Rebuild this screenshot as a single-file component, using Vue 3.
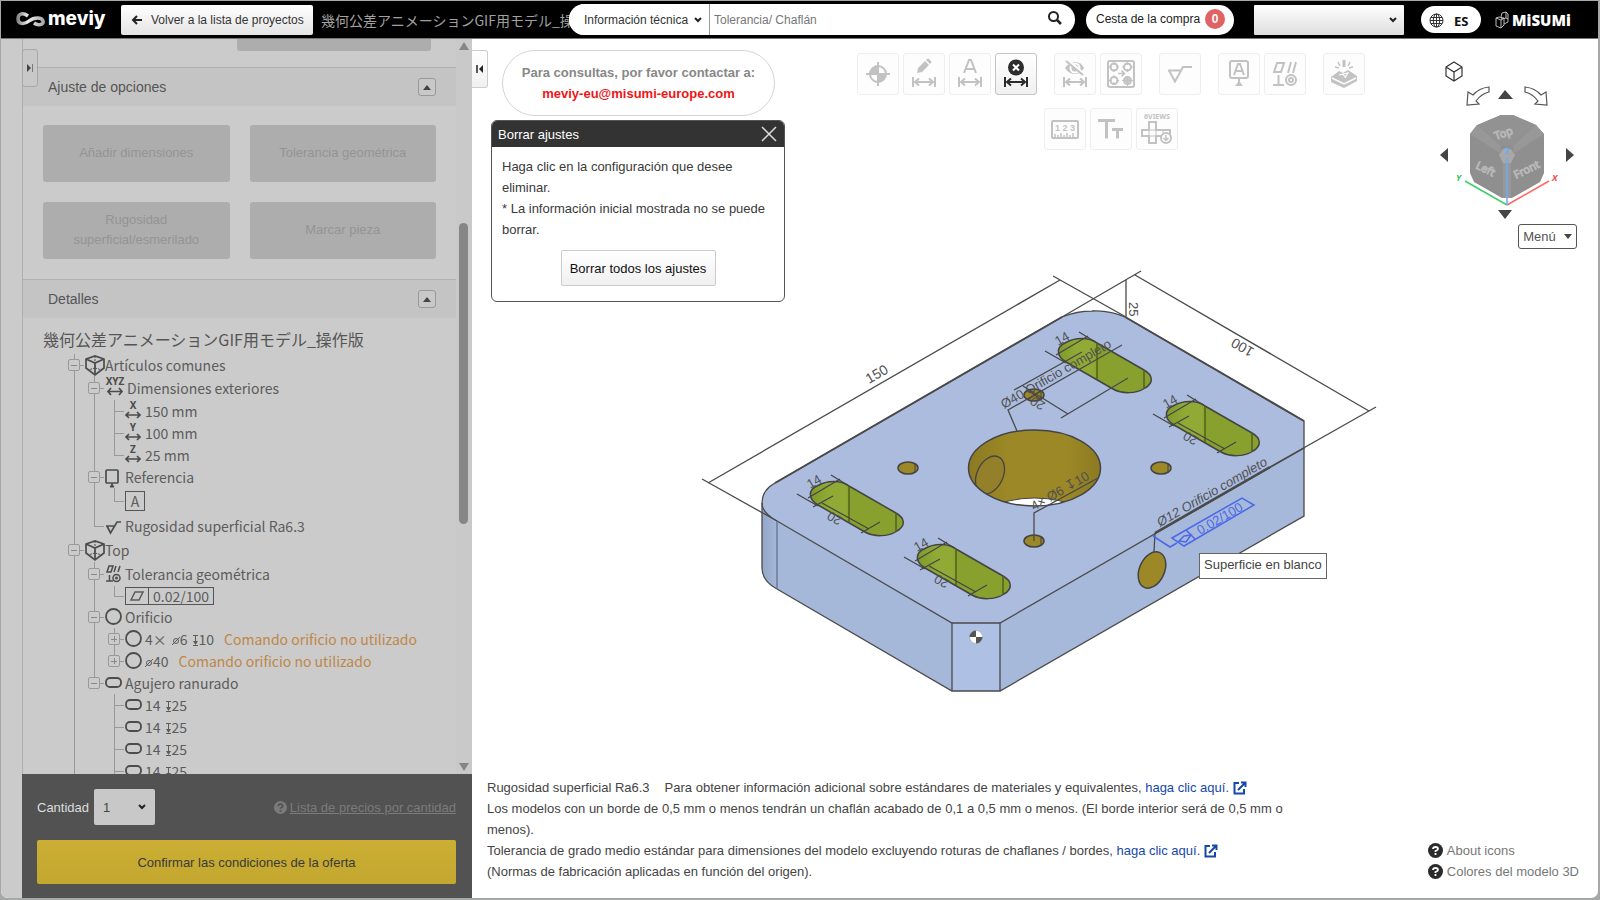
<script setup>
import { ref } from 'vue'

const dim = '<path d="M10 24v10M32 24v10M12 29h18M16 25.500L12 29l4 3.500M26 25.500l4 3.500-4 3.500" fill="none" stroke="currentColor" stroke-width="2"/>'

const toolRows = [
  [
    [
      { label: 'Origen', art: '<circle cx="21" cy="21" r="8" fill="none" stroke="currentColor" stroke-width="2"/><path d="M21 21v-8a8 8 0 0 0-8 8zM21 21v8a8 8 0 0 0 8-8z" fill="currentColor"/><path d="M21 9v24M9 21h24" stroke="currentColor" stroke-width="2"/>' },
      { label: 'Editar dimensiones', art: '<path d="M14 20l1-5 7-7 4 4-7 7zM23 7l1-1q1-1 2 0l2 2q1 1 0 2l-1 1z" fill="currentColor"/>' + dim },
      { label: 'Texto de dimensiones', art: '<path d="M15 20l5-13h2l5 13M17 16h8" fill="none" stroke="currentColor" stroke-width="2"/>' + dim },
      { label: 'Borrar ajustes', active: true, art: '<circle cx="21" cy="14.500" r="8" fill="currentColor"/><path d="M18 11.500l6 6M24 11.500l-6 6" stroke="#fff" stroke-width="2"/>' + dim },
    ],
    [
      { label: 'Ocultar dimensiones', art: '<path d="M11 15q4-6 10-6t9 6q-3 6-9 6t-10-6z" fill="currentColor"/><circle cx="21" cy="15" r="4.500" fill="none" stroke="#fdfdfd" stroke-width="2"/><path d="M13 7l17 15" stroke="#fdfdfd" stroke-width="4"/><path d="M12 8l17 14" stroke="currentColor" stroke-width="2"/>' + dim },
      { label: 'Copiar ajustes', art: '<g fill="none" stroke="currentColor" stroke-width="2"><rect x="8" y="8" width="26" height="26" rx="2"/><circle cx="14" cy="14" r="3.500"/><circle cx="27.500" cy="14" r="3.500"/><circle cx="14" cy="27.500" r="3.500"/><circle cx="27.500" cy="27.500" r="3.500"/><path d="M18 20.500h6M21.500 17.500l3 3-3 3" stroke-width="1.500"/></g><path d="M14 9v3M14 16v3M9 14h3M16 14h3M27.500 9v3M27.500 16v3M22 14h3M30 14h3M14 22v3M14 29v3M9 27.500h3M16 27.500h3M22 27.500h3M30 27.500h3M27.500 30v3" stroke="currentColor" stroke-width="1"/><circle cx="27.500" cy="27.500" r="2.500" fill="currentColor"/>' },
    ],
    [
      { label: 'Rugosidad', art: '<path d="M9 17.500h13M10 17.500l6 11 8-14.500h9" fill="none" stroke="currentColor" stroke-width="2"/>' },
    ],
    [
      { label: 'Referencia', art: '<rect x="12" y="8" width="18" height="17" rx="2" fill="none" stroke="currentColor" stroke-width="2"/><path d="M16 22l4-11h2l4 11M18 18h6" fill="none" stroke="currentColor" stroke-width="2"/><path d="M21 25v6" stroke="currentColor" stroke-width="2"/><path d="M17 33l4-5 4 5z" fill="currentColor"/>' },
      { label: 'Tolerancia geométrica', art: '<g fill="none" stroke="currentColor" stroke-width="2"><path d="M13 10h7l-3 9h-7zM27 9l-3 11M32 9l-3 11M9 32h11M14.500 22v10"/><circle cx="27" cy="27" r="5"/><circle cx="27" cy="27" r="2"/></g>' },
    ],
    [
      { label: 'Marcar pieza', art: '<g stroke="currentColor" fill="none"><path d="M21 7v7" stroke-width="3"/><path d="M15 9l2 4M27 9l-2 4M12 14l4 1M30 14l-4 1" stroke-width="1.500"/></g><path d="M8 24l8-6 4 2 5-3 9 6v5L21 35 8 29z" fill="currentColor"/><path d="M9 25l12 6 12-6" stroke="#fdfdfd" stroke-width="1.500" fill="none"/><path d="M16 22l9-2-3 5M19 21l4 3" stroke="#fdfdfd" stroke-width="1.200" fill="none"/>' },
    ],
  ],
  [
    [
      { label: 'Medir', art: '<rect x="8" y="13" width="26" height="17" rx="1" fill="none" stroke="currentColor" stroke-width="2"/><text x="21" y="23" font-size="9" font-weight="bold" text-anchor="middle" fill="currentColor" font-family="Liberation Sans">1 2 3</text><path d="M11 30v-4M14 30v-3M17 30v-5M20 30v-3M23 30v-5M26 30v-3M29 30v-5" stroke="currentColor" stroke-width="1.500"/>' },
      { label: 'Tamaño de texto', art: '<path d="M8 12.500h17M16.500 12.500v18M22 21.500h11M27.500 21.500v9" stroke="currentColor" stroke-width="3"/>' },
      { label: 'Seis vistas', art: '<text x="21" y="11" font-size="7" font-weight="bold" text-anchor="middle" fill="currentColor" font-family="Noto Sans">6VIEWS</text><path d="M13 14h7v8h14v6H20v7h-7v-7H6v-6h7z" fill="none" stroke="currentColor" stroke-width="2"/><path d="M13 22h7v6h-7zM27 22v6" fill="none" stroke="currentColor" stroke-width="1"/><circle cx="30" cy="30" r="5" fill="#fdfdfd" stroke="currentColor" stroke-width="2"/><path d="M30 27v5M27.500 30l2.500 2.500 2.500-2.500" fill="none" stroke="currentColor" stroke-width="1.500"/>' },
    ],
  ],
]

const icons = {
  cube: '<path d="M1 4l9-3 9 3v9l-9 7-9-7zM1 4l9 4 9-4M10 8v12" fill="none" stroke="currentColor" stroke-width="1.700"/><path d="M10 1v12M10 13l-7 2M10 13l7 2" stroke="currentColor" stroke-dasharray="2 1" fill="none"/>',
  xyz: '<text x="10" y="7" font-size="10" font-weight="bold" text-anchor="middle" fill="currentColor" font-family="Noto Sans">XYZ</text><path d="M3 13.500h14M6 10l-3 3.500 3 3.500M14 10l3 3.500-3 3.500" fill="none" stroke="currentColor" stroke-width="1.700"/>',
  x: '<text x="8" y="8" font-size="10" font-weight="bold" text-anchor="middle" fill="currentColor" font-family="Noto Sans">X</text>',
  y: '<text x="8" y="8" font-size="10" font-weight="bold" text-anchor="middle" fill="currentColor" font-family="Noto Sans">Y</text>',
  z: '<text x="8" y="8" font-size="10" font-weight="bold" text-anchor="middle" fill="currentColor" font-family="Noto Sans">Z</text>',
  datum: '<rect x="1" y="3" width="12" height="13" rx="1" fill="none" stroke="currentColor" stroke-width="1.700"/><path d="M7 16v2M5 20l2-3 2 3z" fill="currentColor" stroke="currentColor"/>',
  rough: '<path d="M1 10h8M2 10l3.500 7L12 6h4" fill="none" stroke="currentColor" stroke-width="1.700"/>',
  geo: '<path d="M4 2h4L6 8H2zM11 2L9 8M15 2l-2 6M1 17h7M4.500 11v6" fill="none" stroke="currentColor" stroke-width="1.500"/><circle cx="11.500" cy="14" r="3.500" fill="none" stroke="currentColor" stroke-width="1.500"/><circle cx="11.500" cy="14" r="1.500" fill="currentColor"/>',
  hole: '<circle cx="8.500" cy="9.500" r="7.500" fill="none" stroke="currentColor" stroke-width="1.800"/>',
  slot: '<rect x="1" y="5" width="15" height="9" rx="4" fill="none" stroke="currentColor" stroke-width="1.800"/>',
}
const arrow = '<path d="M1 14h14M4 11l-3 3 3 3M12 11l3 3-3 3" fill="none" stroke="currentColor" stroke-width="1.700"/>'
icons.x += arrow
icons.y += arrow
icons.z += arrow

const tree = [
  { g: ['minus'], icon: 'cube', w: 20, text: 'Artículos comunes', h: 'h22' },
  { g: ['line', 'minus'], icon: 'xyz', w: 22, text: 'Dimensiones exteriores', h: 'h24' },
  { g: ['line', 'line', 'tee'], icon: 'x', w: 20, text: '150 mm', h: 'h22' },
  { g: ['line', 'line', 'tee'], icon: 'y', w: 20, text: '100 mm', h: 'h22' },
  { g: ['line', 'line', 'elbow'], icon: 'z', w: 20, text: '25 mm', h: 'h22' },
  { g: ['line', 'minus'], icon: 'datum', w: 20, text: 'Referencia', h: 'h22' },
  { g: ['line', 'line', 'elbow'], box: 'A', h: 'h26' },
  { g: ['line', 'elbow'], icon: 'rough', w: 20, text: 'Rugosidad superficial Ra6.3', h: 'h24' },
  { g: ['minus'], icon: 'cube', w: 20, text: 'Top', h: 'h24' },
  { g: ['line', 'minus'], icon: 'geo', w: 20, text: 'Tolerancia geométrica', h: 'h24' },
  { g: ['line', 'line', 'elbow'], frame: '0.02/100', h: 'h20' },
  { g: ['line', 'minus'], icon: 'hole', w: 20, text: 'Orificio', h: 'h22' },
  { g: ['line', 'line', 'plus'], icon: 'hole', w: 20, text: '4×', dia: '6', depth: '10', warn: true, h: 'h22' },
  { g: ['line', 'line', 'plus end'], icon: 'hole', w: 20, dia: '40', warn: true, h: 'h22' },
  { g: ['line', 'minus end'], icon: 'slot', w: 20, text: 'Agujero ranurado', h: 'h22' },
  ...[1, 2, 3, 4].map(() => ({ g: ['line', 'none', 'tee'], icon: 'slot', w: 20, text: '14', depth: '25', h: 'h22' })),
]

const slots = [[0, 0, true], [107, 63, true], [248, -143, false], [356, -80, true]]
const holes = [[908, 468], [1034, 395], [1161, 468], [1034, 541]]
const qty = ref('1')
</script>

<template>
  <div class="app">
    <header class="top">
      <div class="logo">
        <svg width="30" height="16" viewBox="0 0 30 16" aria-hidden="true">
          <defs><linearGradient id="lg" x1="0" x2="1"><stop offset="0" stop-color="#888" /><stop offset=".4" stop-color="#eee" /><stop offset="1" stop-color="#aaa" /></linearGradient></defs>
          <path d="M12 4C6 0 2 2 2 7c0 5 6 6 11 2 5-4 13-4 14 0 1 4-5 5-9 2" fill="none" stroke="url(#lg)" stroke-width="3.500" />
        </svg>
        <span>meviy</span>
      </div>
      <button class="back" type="button">
        <svg width="12" height="10" viewBox="0 0 12 10" aria-hidden="true"><path d="M6 1L2 5l4 4M2 5h9" fill="none" stroke="#222" stroke-width="2" /></svg>
        <span>Volver a la lista de proyectos</span>
      </button>
      <span class="project">幾何公差アニメーションGIF用モデル_操作版</span>
      <form class="search" @submit.prevent>
        <select aria-label="Tipo de búsqueda"><option>Información técnica</option></select>
        <input type="text" placeholder="Tolerancia/ Chaflán" aria-label="Buscar" />
        <button type="submit" aria-label="Buscar">
          <svg width="16" height="16" viewBox="0 0 16 16"><circle cx="6.500" cy="6.500" r="4.500" fill="none" stroke="#222" stroke-width="2" /><path d="M10 10l4 4" stroke="#222" stroke-width="2.500" /></svg>
        </button>
      </form>
      <button class="cart" type="button">Cesta de la compra <b>0</b></button>
      <select class="account" aria-label="Cuenta"><option></option></select>
      <button class="lang" type="button">
        <svg width="15" height="15" viewBox="0 0 15 15" aria-hidden="true"><g fill="none" stroke="#333"><circle cx="7.500" cy="7.500" r="6.500" /><ellipse cx="7.500" cy="7.500" rx="3.200" ry="6.500" /><path d="M7.500 1v13M1 7.500h13M2 4.500h11M2 10.500h11" /></g></svg>
        <span>ES</span>
      </button>
      <div class="misumi">
        <svg width="14" height="18" viewBox="0 0 14 18" aria-hidden="true"><path d="M1 7l5 2v8l-5-2zM6 9l3-2v7l-3 3M1 7l3-1 5 1M6 6l1-4 4-1v6l-4 1zM11 1l2 2v8l-4 2M11 7l2 1" fill="none" stroke="#bbb" /></svg>
        <span>MiSUMi</span>
      </div>
    </header>

    <div class="body">
      <div class="gutter"></div>
      <aside class="side">
        <button class="tab dim" type="button" aria-label="Expandir panel">
          <svg width="8" height="10" viewBox="0 0 8 10"><path d="M1 1l4 4-4 4z" fill="#444" /><path d="M6.500 1v8" stroke="#777" /></svg>
        </button>
        <div class="scroller">
          <div class="content">
            <div class="cutoff"><button type="button" disabled aria-label="Opciones"></button></div>
            <h2>Ajuste de opciones
              <button type="button" aria-label="Contraer ajuste de opciones"><svg width="8" height="5" viewBox="0 0 8 5"><path d="M0 5l4-5 4 5z" fill="#444" /></svg></button>
            </h2>
            <div class="options">
              <button type="button" disabled>Añadir dimensiones</button>
              <button type="button" disabled>Tolerancia geométrica</button>
              <button type="button" disabled>Rugosidad superficial/esmerilado</button>
              <button type="button" disabled>Marcar pieza</button>
            </div>
            <h2>Detalles
              <button type="button" aria-label="Contraer detalles"><svg width="8" height="5" viewBox="0 0 8 5"><path d="M0 5l4-5 4 5z" fill="#444" /></svg></button>
            </h2>
            <div class="model-name">幾何公差アニメーションGIF用モデル_操作版</div>
            <ul class="tree">
              <li v-for="(row, i) in tree" :key="i" :class="row.h">
                <span v-for="(g, j) in row.g" :key="j" class="guide" :class="g"><i v-if="/us/.test(g)"></i></span>
                <svg v-if="row.icon" class="ti" :width="row.w" height="20" v-html="icons[row.icon]"></svg>
                <span v-if="row.box" class="boxed">{{ row.box }}</span>
                <span v-if="row.frame" class="frame">
                  <svg width="22" height="16" viewBox="0 0 22 16"><path d="M9 4h8l-4 8H5z" fill="none" stroke="currentColor" stroke-width="1.500" /></svg>
                  <span>{{ row.frame }}</span>
                </span>
                <span v-if="row.text" class="label">{{ row.text }}</span>
                <span v-if="row.dia" class="value" :class="{ gap: row.text }">
                  <svg width="8" height="14" viewBox="0 0 8 14"><circle cx="4" cy="8" r="2.500" fill="none" stroke="currentColor" /><path d="M0 12l8-8" stroke="currentColor" /></svg>{{ row.dia }}
                </span>
                <span v-if="row.depth" class="value near">
                  <svg width="7" height="14" viewBox="0 0 7 14"><path d="M1 2.500h5M3.500 2v8M1 12.500h5" fill="none" stroke="currentColor" /><path d="M1 8h5l-2.500 4z" fill="currentColor" /></svg>{{ row.depth }}
                </span>
                <span v-if="row.warn" class="warn">Comando orificio no utilizado</span>
              </li>
            </ul>
          </div>
          <div class="bar"><span class="up"></span><span class="thumb"></span><span class="down"></span></div>
        </div>
        <div class="offer">
          <div class="qty">
            <label for="qty">Cantidad</label>
            <select id="qty" v-model="qty"><option>1</option><option>2</option></select>
            <a href="#"><svg width="13" height="13" viewBox="0 0 15 15" aria-hidden="true"><circle cx="7.500" cy="7.500" r="7.500" fill="#7b7b7b" /><path d="M5 6q0-2.500 2.500-2.500T10 6q0 1-2.500 2.500V9M7.500 10.500v2" fill="none" stroke="#525252" stroke-width="2" /></svg><span>Lista de precios por cantidad</span></a>
          </div>
          <button type="button" class="confirm">Confirmar las condiciones de la oferta</button>
        </div>
      </aside>

      <main class="main">
        <svg class="model" width="700" height="450" viewBox="690 260 700 450" role="img" aria-label="Modelo 3D">
          <defs>
            <linearGradient id="gold" x1="0" x2="1"><stop offset="0" stop-color="#8c7a22" /><stop offset=".3" stop-color="#9c8826" /><stop offset=".75" stop-color="#9c8826" /><stop offset="1" stop-color="#8c7a22" /></linearGradient>
            <linearGradient id="lime" x1="0" x2="1"><stop offset="0" stop-color="#7f9a2c" /><stop offset=".2" stop-color="#90aa35" /><stop offset=".38" stop-color="#90aa35" /><stop offset=".42" stop-color="#88a12e" /><stop offset="1" stop-color="#88a12e" /></linearGradient>
            <linearGradient id="side" x1="0" x2="1"><stop offset="0" stop-color="#94a6c8" /><stop offset="1" stop-color="#a5b8da" /></linearGradient>
            <clipPath id="bore"><ellipse cx="1034.500" cy="468" rx="66" ry="38" /></clipPath>
          </defs>
          <path d="M762 500V568Q762 581 777 589V521z" fill="url(#side)" />
          <path d="M777 521V589L952 691V623z" fill="#a6b8d9" />
          <path d="M952 623h48v68h-48z" fill="#aec1e4" />
          <path d="M1000 623L1304 448V516L1000 691z" fill="#a7b9da" />
          <path d="M952 623h48L1304 448V421L1126 317.500Q1110 310 1092 311Q1077 311 1062 317L775 483Q762 490 762 503Q762 513 777 521z" fill="#abbcde" />
          <g fill="none" stroke="#4a4a4a" stroke-width="1.300">
            <path d="M952 623h48L1304 448V421L1126 317.500Q1110 310 1092 311Q1077 311 1062 317L775 483Q762 490 762 503Q762 513 777 521z" />
            <path d="M775 483L1062 317M1126 317.500L1304 421" stroke-width="2" />
            <path d="M762 503V568Q762 581 777 589L952 691H1000L1304 516V448M952 623v68M1000 623v68" />
            <path d="M777 521V589" stroke="#66708a" />
          </g>

          <g v-for="(s, i) in slots" :key="i" :transform="`translate(${s[0]} ${s[1]})`">
            <path d="M818 505C808 499 808 490 817 486C827 480 841 480 849 486L896 513C905 518 906 526 897 531C888 537 874 537 865 532Z" fill="url(#lime)" stroke="#444" stroke-width="1.500" />
            <g fill="none" stroke="#444" stroke-width="1.200">
              <path d="M849 486V522M896 513V531" stroke="#52611e" stroke-width="1.500" />
              <path d="M831 475L849 486M797 494L818 506M808 498L840 479" />
              <path v-if="s[2]" d="M813 507L833 496M861 533L880 522M822 503L869 529" />
            </g>
            <text transform="translate(810 489) rotate(-30)" class="d13">14</text>
            <text v-if="s[2]" transform="translate(843 518) rotate(210)" class="d13">20</text>
          </g>

          <ellipse cx="1034.500" cy="468" rx="66" ry="38" fill="url(#gold)" />
          <g clip-path="url(#bore)">
            <ellipse cx="1034.500" cy="535" rx="66" ry="37" fill="#fff" stroke="#444" />
            <ellipse cx="990" cy="475" rx="13" ry="20" transform="rotate(25 990 475)" fill="#94802a" stroke="#444" stroke-width="1.300" />
          </g>
          <ellipse cx="1034.500" cy="468" rx="66" ry="38" fill="none" stroke="#444" stroke-width="1.500" />
          <g v-for="(h, i) in holes" :key="'h' + i">
            <ellipse :cx="h[0]" :cy="h[1]" rx="10" ry="6" fill="#9c8826" stroke="#444" stroke-width="1.500" />
            <path :d="`M${h[0] + 7} ${h[1] - 4}v8`" stroke="#444" />
          </g>
          <path d="M1028 390l12 9" stroke="#444" stroke-width="1.200" />
          <ellipse cx="1152" cy="570" rx="12.500" ry="19" transform="rotate(24 1152 570)" fill="#9c8826" stroke="#444" stroke-width="1.500" />

          <g fill="none" stroke="#4a4a4a" stroke-width="1.300">
            <path d="M708 483L1060 280M702 479L777 521M1053 276L1126 317" />
            <path d="M1141 271L1062 317M1135 275L1369 411M1376 407L1270 467" />
            <path d="M1126 280V317" />
            <path d="M1017 431L1008 410L1122 345" />
            <path d="M1082 352L1014 390M1128 378L1061 418M1023 386L1068 414M1029 399l11-8" />
            <path d="M1034 541V513L1098 478" />
            <path d="M1154 552L1155 533" />
            <path d="M1155 533L1270 467" stroke-width="2.500" />
          </g>
          <text transform="translate(869 384) rotate(-30)" class="d14">150</text>
          <text transform="translate(1255 349) rotate(210)" class="d14">100</text>
          <text transform="translate(1129 302) rotate(90)" class="d13">25</text>
          <text transform="translate(1004 409) rotate(-30)" class="d13">Ø40 Orificio completo</text>
          <text transform="translate(1046 403) rotate(210)" class="d13">20</text>
          <text transform="translate(1034 511) rotate(-30)" class="d13">4× Ø6 ↧10</text>
          <text transform="translate(1160 527) rotate(-30)" class="d13 it">Ø12 Orificio completo</text>
          <g fill="none" stroke="#4a68e8" stroke-width="1.500">
            <path d="M1153 536L1170 547L1177 543M1172 538L1242 498L1254 505L1184 546zM1186 530l9 9M1179 541l5-5 7-1-5 7z" />
          </g>
          <text transform="translate(1200 535) rotate(-30)" class="d13 blue">0.02/100</text>
          <g transform="translate(976 637)"><circle r="6.500" fill="#fff" stroke="#999" stroke-width=".5" /><path d="M0 0V-6.500A6.500 6.500 0 0 0-6.500 0zM0 0V6.500A6.500 6.500 0 0 0 6.500 0z" fill="#555" /></g>
        </svg>
        <div class="tip" role="tooltip">Superficie en blanco</div>

        <div class="upper">
          <button class="tab" type="button" aria-label="Contraer panel">
            <svg width="8" height="10" viewBox="0 0 8 10"><path d="M7 1L3 5l4 4z" fill="#222" /><path d="M1 1v8" stroke="#222" stroke-width="1.500" /></svg>
          </button>
          <div class="left">
            <div class="contact">Para consultas, por favor contactar a:<br /><a href="mailto:meviy-eu@misumi-europe.com">meviy-eu@misumi-europe.com</a></div>
            <section class="dialog" role="dialog" aria-labelledby="dlg">
              <div class="dhead"><span id="dlg">Borrar ajustes</span>
                <button type="button" aria-label="Cerrar"><svg width="16" height="16" viewBox="0 0 16 16"><path d="M1 1l14 14M15 1L1 15" stroke="#ddd" stroke-width="1.500" /></svg></button>
              </div>
              <div class="dbody">
                <p>Haga clic en la configuración que desee eliminar.<br />* La información inicial mostrada no se puede borrar.</p>
                <button type="button">Borrar todos los ajustes</button>
              </div>
            </section>
          </div>
          <div class="tools">
            <div v-for="(r, i) in toolRows" :key="i" class="trow">
              <div v-for="(grp, j) in r" :key="j" class="tgroup">
                <button v-for="t in grp" :key="t.label" type="button" :aria-label="t.label" :class="{ active: t.active }">
                  <svg width="40" height="40" viewBox="1 1 40 40" v-html="t.art"></svg>
                </button>
              </div>
            </div>
          </div>
          <div class="nav">
            <svg width="140" height="164" viewBox="1437 60 140 164" role="img" aria-label="Cubo de vistas">
              <path d="M1446 67l8-5 8 5v9l-8 5-8-5zM1446 67l8 5 8-5M1454 72v9" fill="none" stroke="#333" stroke-width="1.200" />
              <path d="M1489 87q-10 1-16 8l-5-3-1 13 12-1-3-3q5-7 13-9z" fill="none" stroke="#555" stroke-width="1.200" />
              <path d="M1525 87q10 1 16 8l5-3 1 13-12-1 3-3q-5-7-13-9z" fill="none" stroke="#555" stroke-width="1.200" />
              <path d="M1498 99l7-9 8 9zM1498 210h14l-7 9zM1448 148v14l-8-7zM1566 148v14l8-7z" fill="#444" />
              <path d="M1501 115h12L1536 125L1544 134V173L1540 182L1512 198H1502L1474 182L1470 173V134L1477 125z" fill="#8f8f8f" />
              <path d="M1501 115h12L1536 125L1513 145H1501L1478 125z" fill="#929292" />
              <path d="M1477 125L1501 146L1500 153L1470 134zM1536 125L1513 146L1514 153L1544 134z" fill="#989898" />
              <path d="M1503 162h8V198H1503z" fill="#989898" />
              <path d="M1503 149h8l4 6-4 8h-8l-4-8z" fill="#a8a8a8" />
              <g class="cubetext">
                <text transform="translate(1496 140) rotate(-20)">Top</text>
                <text transform="translate(1475 168) rotate(26)">Left</text>
                <text transform="translate(1516 179) rotate(-26)">Front</text>
              </g>
              <path d="M1507 205L1465 181" stroke="#3fcf6a" stroke-width="1.500" />
              <path d="M1507 205L1549 181" stroke="#f66" stroke-width="1.500" />
              <path d="M1507 205V157" stroke="#6aaef5" stroke-width="1.500" />
              <text x="1456" y="181" class="axis" fill="#2fc45c">Y</text>
              <text x="1552" y="181" class="axis" fill="#f25555">X</text>
              <text x="1504" y="154" class="axis" fill="#6aaef5">Z</text>
            </svg>
            <button type="button">Menú <svg width="8" height="5" viewBox="0 0 8 5"><path d="M0 0h8L4 5z" fill="#444" /></svg></button>
          </div>
        </div>

        <div class="lower">
          <p class="notes">
            <span class="ra">Rugosidad superficial Ra6.3</span>Para obtener información adicional sobre estándares de materiales y equivalentes, <a href="#">haga clic aquí. <svg width="14" height="14" viewBox="0 0 14 14"><path d="M6 2H1.500v10.500H11V8M5 9l7-7M8 1.500h4.500V6" fill="none" stroke="#1648ab" stroke-width="2" /></svg></a><br />
            Los modelos con un borde de 0,5 mm o menos tendrán un chaflán acabado de 0,1 a 0,5 mm o menos. (El borde interior será de 0,5 mm o menos).<br />
            Tolerancia de grado medio estándar para dimensiones del modelo excluyendo roturas de chaflanes / bordes, <a href="#">haga clic aquí. <svg width="14" height="14" viewBox="0 0 14 14"><path d="M6 2H1.500v10.500H11V8M5 9l7-7M8 1.500h4.500V6" fill="none" stroke="#1648ab" stroke-width="2" /></svg></a><br />
            (Normas de fabricación aplicadas en función del origen).
          </p>
          <div class="help">
            <a v-for="h in ['About icons', 'Colores del modelo 3D']" :key="h" href="#">
              <svg width="15" height="15" viewBox="0 0 15 15" aria-hidden="true"><circle cx="7.500" cy="7.500" r="7.500" fill="#2b2b2b" /><path d="M5 6q0-2 2.500-2T10 6q0 1-2.500 2v1M7.500 10v2" fill="none" stroke="#fff" stroke-width="1.800" /></svg>{{ h }}
            </a>
          </div>
        </div>
      </main>
    </div>
  </div>
</template>

<style>
body { background: #a6a8a8; }
</style>

<style scoped>
* { box-sizing: border-box; }
.app { height: 100vh; padding: 1px 2px 2px 1px; display: flex; flex-direction: column; font: 13px "Liberation Sans", Arial, sans-serif; color: #444; }
button, select, input { font: inherit; color: inherit; margin: 0; padding: 0; border: 0; }
select { appearance: none; background-repeat: no-repeat; }
h2, p, ul { margin: 0; padding: 0; font-weight: normal; }
a { text-decoration: none; color: inherit; }

.top { height: 38px; flex: none; background: #000; border-bottom: 1px solid #777; display: flex; align-items: center; }
.logo { display: flex; align-items: center; width: 105px; padding-left: 15px; color: #fff; font: 800 19px/24px Inter, sans-serif; flex: none; }
.logo span { margin-left: 2px; padding-bottom: 2px; }
.logo svg { flex: none; }
.back { margin-left: 15px; width: 192px; height: 30px; flex: none; border-radius: 2px; background: linear-gradient(#fff, #e4e4e4); font-size: 12px; color: #333; display: flex; align-items: center; gap: 8px; padding-left: 10px; }
.project { flex: 1; min-width: 0; overflow: hidden; white-space: nowrap; margin: 0 -12px 0 8px; font: 14px/20px "Noto Sans CJK JP", sans-serif; color: #a0a0a0; }
.search { position: relative; width: 506px; height: 31px; flex: none; border-radius: 16px; background: #fff; overflow: hidden; display: flex; font-size: 12px; }
.search select { width: 141px; padding-left: 15px; border-right: 1px solid #999; background-color: #fff; color: #333; }
.search input { flex: 1; padding-left: 4px; outline: 0; color: #777; }
.search input::placeholder { color: #777; opacity: 1; }
.search button { width: 40px; background: none; display: flex; align-items: center; padding: 0 0 4px 12px; }
.search select, .qty select { background-image: url("data:image/svg+xml,%3Csvg xmlns='http://www.w3.org/2000/svg' width='8' height='6'%3E%3Cpath d='M1 1l3 3 3-3' fill='none' stroke='%23222' stroke-width='2'/%3E%3C/svg%3E"); background-position: right 7px center; }
.account { background-image: url("data:image/svg+xml,%3Csvg xmlns='http://www.w3.org/2000/svg' width='8' height='6'%3E%3Cpath d='M1 1l3 3 3-3' fill='none' stroke='%23222' stroke-width='2'/%3E%3C/svg%3E"), linear-gradient(#fff, #dedede); background-position: right 7px center, 0 0; }
.cart { margin-left: 11px; width: 148px; height: 30px; flex: none; border-radius: 15px; background: #fff; color: #222; font-size: 12px; display: flex; align-items: center; padding: 0 0 2px 10px; gap: 5px; white-space: nowrap; }
.cart b { width: 20px; height: 20px; border-radius: 10px; background: #e06262; color: #fff; line-height: 20px; text-align: center; }
.account { margin-left: 20px; width: 150px; height: 30px; flex: none; border-radius: 1px; }
.lang { margin-left: 17px; width: 60px; height: 27px; flex: none; border-radius: 14px; background: #fff; display: flex; align-items: center; padding: 2px 0 0 8px; gap: 10px; color: #111; font: bold 13px/18px "Noto Sans", sans-serif; }
.misumi { margin: 0 28px 0 14px; width: 75px; flex: none; display: flex; align-items: center; gap: 3px; color: #fff; font: 800 15px "Open Sans", sans-serif; }
.misumi svg { flex: none; }

.body { flex: 1; min-height: 0; display: flex; background: #fff; border-radius: 0 0 7px 7px; overflow: hidden; }
.gutter { width: 21px; flex: none; background: #cbcbcb; }
.side { position: relative; width: 450px; flex: none; display: flex; flex-direction: column; background: #cbcbcb; }
.scroller { flex: 1; min-height: 0; display: flex; border-left: 1px solid #afafaf; }
.content { flex: 1; min-width: 0; overflow: hidden; color: #555; }
.tab { width: 16px; height: 38px; flex: none; border: 1px solid #ccc; border-left: 0; border-radius: 0 3px 3px 0; background: linear-gradient(#fff, #f0f0f0); display: flex; align-items: center; justify-content: center; }
.tab.dim { position: absolute; left: 0; top: 10px; border: 1px solid #a8a8a8; border-radius: 3px; background: #c8c8c8; z-index: 1; }
.cutoff { height: 28px; display: flex; justify-content: flex-end; padding-right: 25px; }
.cutoff button { width: 194px; height: 12px; background: #adadad; border-radius: 0 0 3px 3px; }
h2 { height: 39px; border-top: 1px solid #b0b0b0; background: #c4c4c4; font-size: 14px; display: flex; align-items: center; justify-content: space-between; padding: 0 20px 0 25px; }
h2 button { width: 18px; height: 18px; border: 1px solid #999; border-radius: 3px; background: #c8c8c8; display: flex; align-items: center; justify-content: center; }
.options { display: grid; grid-template-columns: 1fr 1fr; gap: 20px; padding: 19px 20px 20px; }
.options button { height: 57px; border-radius: 3px; background: #adadad; color: #949494; line-height: 20px; padding: 0 24px 2px; }
.model-name { padding: 9px 0 3px 20px; font: 16px/24px "Noto Sans CJK JP", sans-serif; white-space: nowrap; }
.tree { list-style: none; padding-left: 41px; font: 14px "Noto Sans CJK JP", sans-serif; }
.tree li { display: flex; align-items: center; white-space: nowrap; line-height: 20px; color: #5c5c5c; }
.h20 { height: 20px; } .h22 { height: 22px; } .h24 { height: 24px; } .h26 { height: 26px; }
.guide { width: 20px; align-self: stretch; flex: none; display: flex; align-items: center; justify-content: center; background-repeat: no-repeat; }
.line, .minus, .plus, .tee { background-image: linear-gradient(#999, #999), linear-gradient(#999, #999); background-size: 1px 100%, 10px 1px; background-position: 10px 0, 10px 50%; }
.line { background-size: 1px 100%, 0 0; }
.elbow, .end { background-image: linear-gradient(#999, #999), linear-gradient(#999, #999); background-size: 1px 50%, 10px 1px; background-position: 10px 0, 10px 50%; }
.guide i { width: 12px; height: 12px; border: 1px solid #999; border-radius: 2px; background: linear-gradient(#888, #888) center / 6px 1px no-repeat #cbcbcb; }
.guide.plus i { background: linear-gradient(#888, #888) center / 6px 1px no-repeat, linear-gradient(#888, #888) center / 1px 6px no-repeat, #cbcbcb; }
.ti { flex: none; margin-left: 1px; color: #4c4c4c; overflow: visible; }
.boxed { margin-left: 1px; width: 20px; height: 20px; border: 1px solid #555; text-align: center; line-height: 18px; }
.frame { margin-left: 1px; display: flex; align-items: center; height: 18px; border: 1px solid #555; line-height: 16px; }
.frame span { border-left: 1px solid #555; padding: 0 4px; }
.value svg { vertical-align: -2px; }
.gap { margin-left: 5px; } .near { margin-left: 4px; }
.warn { color: #bf8748; margin-left: 10px; }
.bar { width: 16px; flex: none; position: relative; background: #c9c9c9; }
.bar span { position: absolute; left: 3px; }
.thumb { top: 25%; height: 41%; width: 9px; border-radius: 5px; background: #868686; }
.up, .down { border: 5px solid transparent; }
.up { top: 0; border-top-width: 3px; border-bottom: 8px solid #868686; } .down { bottom: 0; border-bottom-width: 3px; border-top: 8px solid #868686; }
.offer { flex: none; background: #525252; padding: 15px 16px 14px 15px; }
.qty { display: flex; align-items: center; height: 36px; color: #ddd; }
.qty select { margin-left: 5px; width: 61px; height: 36px; border-radius: 2px; background-color: #c8c8c8; background-position: right 9px center; padding-left: 9px; color: #444; }
.qty a { margin-left: auto; display: flex; align-items: center; gap: 3px; color: #7b7b7b; }
.qty a span { text-decoration: underline; }
.confirm { display: block; width: 100%; height: 44px; margin-top: 15px; border-radius: 2px; background: linear-gradient(#cbae33, #c4a72f); color: #3a3a3a; }

.main { flex: 1; min-width: 0; position: relative; display: flex; flex-direction: column; justify-content: space-between; }
.model { position: absolute; left: 218px; top: 221px; }
.d13, .d14 { font-family: "Liberation Sans", sans-serif; font-size: 13px; fill: #505050; }
.d14 { font-size: 14px; } .blue { fill: #4a68e8; }
.it { font-style: italic; }
.tip { position: absolute; left: 727px; top: 514px; height: 26px; padding: 0 4px; border: 1px solid #666; background: #fff; line-height: 22px; white-space: nowrap; color: #444; }
.upper { position: relative; display: flex; align-items: flex-start; padding: 11px 21px 0 0; }
.left { width: 294px; flex: none; margin-left: 3px; }
.contact { width: 273px; height: 66px; margin-left: 11px; border: 1px solid #d4d4d4; border-radius: 33px; background: #fff; text-align: center; font-weight: bold; line-height: 21px; padding-top: 11px; color: #888; }
.contact a { color: #f01414; }
.dialog { margin-top: 4px; border: 1px solid #555; border-radius: 6px; overflow: hidden; background: #fff; }
.dhead { height: 26px; background: #333; color: #fff; display: flex; align-items: center; justify-content: space-between; padding: 0 7px 0 6px; }
.dhead button { background: none; height: 16px; }
.dhead svg { display: block; }
.dbody { padding: 9px 10px 15px; text-align: center; color: #3a3a3a; }
.dbody p { text-align: left; line-height: 21px; }
.dbody button { margin-top: 10px; width: 155px; height: 36px; border: 1px solid #ccc; border-radius: 2px; background: linear-gradient(#fff, #f0f0f0); color: #111; }
.tools { flex: 1; display: flex; flex-direction: column; gap: 13px; padding-top: 3px; }
.trow { display: flex; justify-content: center; gap: 17px; }
.tgroup { display: flex; gap: 4px; }
.tgroup button { width: 42px; height: 42px; border: 1px solid #eee; border-radius: 3px; background: #fdfdfd; color: #c2c2c2; }
.tgroup button.active { border-color: #c4c4c4; background: linear-gradient(#fff, #f0f0f0); color: #2c2c2c; }
.tgroup svg { display: block; }
.nav { width: 140px; flex: none; padding-top: 10px; display: flex; flex-direction: column; align-items: flex-end; }
.nav button { width: 59px; height: 25px; border: 1px solid #555; border-radius: 3px; background: #fff; color: #555; display: flex; align-items: center; justify-content: center; gap: 8px; }
.cubetext { font: 11px "Noto Sans", sans-serif; fill: #8c8c8c; stroke: #b8b8b8; stroke-width: 1px; }
.axis { font: italic bold 9px "Noto Sans", sans-serif; }
.lower { position: relative; display: flex; align-items: flex-end; justify-content: space-between; padding: 0 19px 16px 15px; line-height: 21px; }
.notes { width: 73%; }
.ra { margin-right: 15px; }
.notes a { color: #1648ab; }
.notes svg { vertical-align: -3px; }
.help { color: #777; }
.help a { display: flex; align-items: center; gap: 4px; }
</style>
